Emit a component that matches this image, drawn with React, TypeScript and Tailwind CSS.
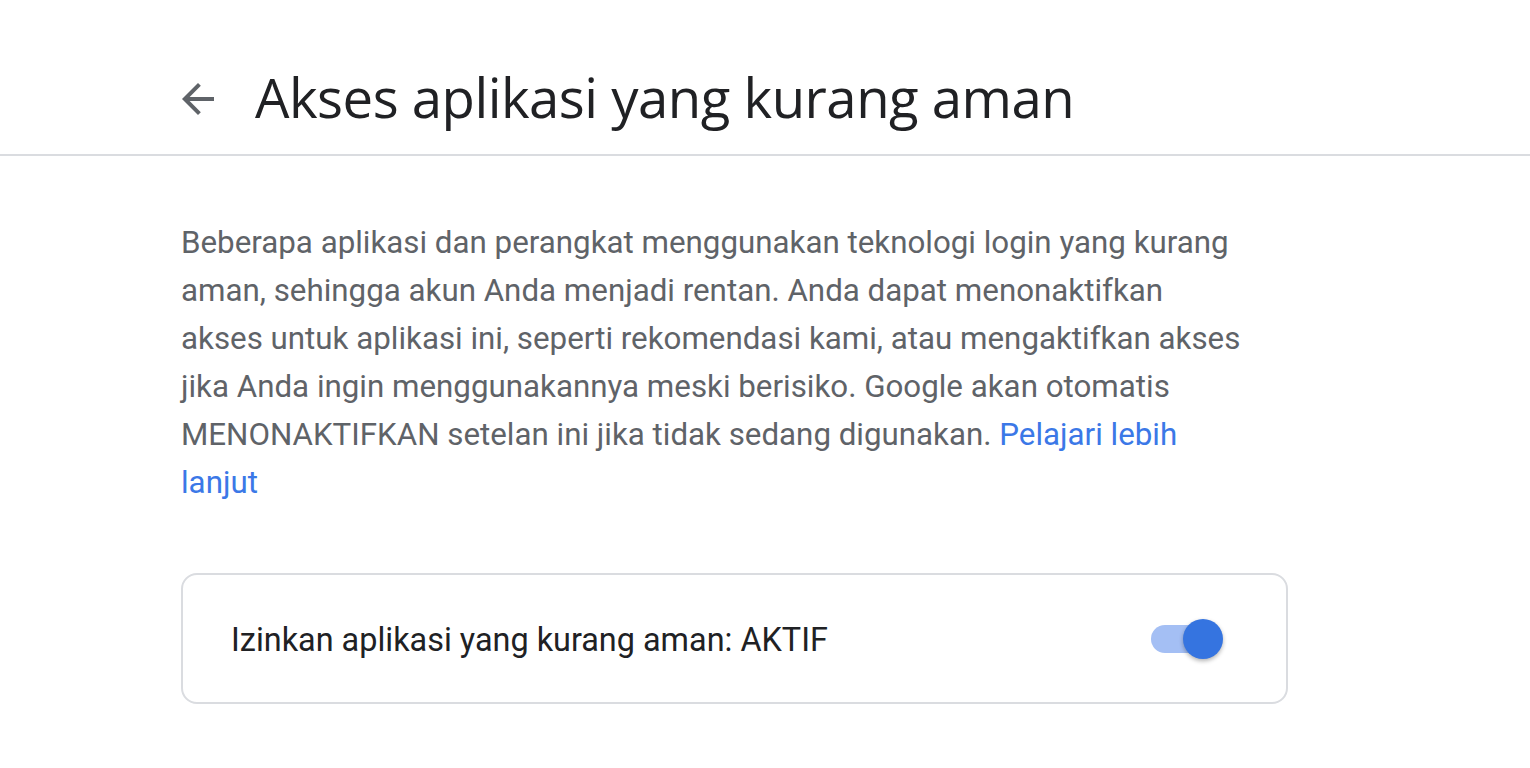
import { useState } from "react";

const BackArrow = () => (
  <svg width="48" height="48" viewBox="0 0 24 24" className="text-[#5f6368]">
    <path fill="currentColor" d="M20 11H7.83l5.59-5.59L12 4l-8 8 8 8 1.41-1.41L7.83 13H20v-2z" />
  </svg>
);

const Toggle = ({ on, onClick }: { on: boolean; onClick: () => void }) => (
  <button onClick={onClick} className="relative w-[72px] h-[40px] flex items-center">
    <span className={`block w-[68px] h-[28px] rounded-full ${on ? "bg-[#a4bff4]" : "bg-[#bdc1c6]"}`} />
    <span
      className={`absolute top-0 w-[40px] h-[40px] rounded-full shadow-[0_2px_4px_rgba(0,0,0,0.3)] ${
        on ? "left-[32px] bg-[#3574e0]" : "left-0 bg-white"
      }`}
    />
  </button>
);

export default function App() {
  const [on, setOn] = useState(true);

  return (
    <div className="min-h-screen bg-white font-['Roboto',sans-serif]">
      <header className="h-[156px] pt-[44px] border-b-2 border-[#dadce0] flex items-center pl-[174px]">
        <BackArrow />
        <h1 className="ml-[33px] text-[54.5px] text-[#202124] font-['Open_Sans','Roboto',sans-serif] tracking-[-0.5px] leading-none pb-[4px]">
          Akses aplikasi yang kurang aman
        </h1>
      </header>

      <main className="pl-[181px] w-[1300px] pt-[63px]">
        {/* line breaks kept as in the original wrap */}
        <p className="text-[31.3px] leading-[48px] text-[#5f6368]">
          Beberapa aplikasi dan perangkat menggunakan teknologi login yang kurang
          <br />
          aman, sehingga akun Anda menjadi rentan. Anda dapat menonaktifkan
          <br />
          akses untuk aplikasi ini, seperti rekomendasi kami, atau mengaktifkan akses
          <br />
          jika Anda ingin menggunakannya meski berisiko. Google akan otomatis
          <br />
          MENONAKTIFKAN setelan ini jika tidak sedang digunakan.{" "}
          <a href="#" className="text-[#3b78e7]">
            Pelajari lebih
            <br />
            lanjut
          </a>
        </p>

        <div className="mt-[66px] w-[1107px] h-[131px] border-2 border-[#dadce0] rounded-[16px] flex items-center justify-between pl-[48px] pr-[63px]">
          <span className="text-[32.4px] text-[#202124] pt-[3px]">
            Izinkan aplikasi yang kurang aman: {on ? "AKTIF" : "NONAKTIF"}
          </span>
          <Toggle on={on} onClick={() => setOn(!on)} />
        </div>
      </main>
    </div>
  );
}
